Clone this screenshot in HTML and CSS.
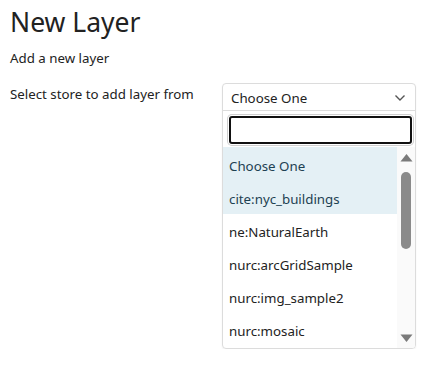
FILE: index.html
```html
<!DOCTYPE html>
<html lang="en">
<head>
    <meta charset="UTF-8">
    <title>New Layer</title>
    <link rel="stylesheet" href="styles.css">
</head>
<body>
    <div class="page">
        <h1>New Layer</h1>
        <p class="subtitle">Add a new layer</p>

        <!-- Store picker -->
        <div class="field-row">
            <label class="field-label">Select store to add layer from</label>
            <div class="dropdown">
                <div class="dropdown-head">
                    <span>Choose One</span>
                    <svg class="chevron" width="12" height="8" viewBox="0 0 12 8">
                        <path d="M1.5 1.5 L6 6 L10.5 1.5" fill="none" stroke="#555" stroke-width="1.4"/>
                    </svg>
                </div>
                <div class="dropdown-search">
                    <input type="text" class="search-input">
                </div>
                <div class="dropdown-body">
                    <ul class="options">
                        <li class="option hl">Choose One</li>
                        <li class="option hl">cite:nyc_buildings</li>
                        <li class="option">ne:NaturalEarth</li>
                        <li class="option">nurc:arcGridSample</li>
                        <li class="option">nurc:img_sample2</li>
                        <li class="option">nurc:mosaic</li>
                    </ul>
                    <div class="scrollbar">
                        <div class="sb-btn">
                            <svg width="13" height="9" viewBox="0 0 13 9"><path d="M0.5 8.5 L6.5 1 L12.5 8.5 Z" fill="#7a7a7a"/></svg>
                        </div>
                        <div class="sb-track"><div class="sb-thumb"></div></div>
                        <div class="sb-btn">
                            <svg width="13" height="9" viewBox="0 0 13 9"><path d="M0.5 0.5 L6.5 8 L12.5 0.5 Z" fill="#7a7a7a"/></svg>
                        </div>
                    </div>
                </div>
            </div>
        </div>
    </div>
</body>
</html>
```
FILE: styles.css
```css
body {
    margin: 0;
    font-family: "Noto Sans", "Open Sans", sans-serif;
    color: #222;
    background-color: #fff;
}
.page {
    padding: 6px 10px 0 10px;
}
h1 {
    margin: 0;
    font-size: 26.5px;
    font-weight: 400;
    line-height: 32px;
}
.subtitle {
    margin: 10px 0 15px 0;
    font-size: 13.3px;
    line-height: 20px;
}
.field-row {
    display: flex;
    align-items: flex-start;
}
.field-label {
    width: 212px;
    padding-top: 1px;
    font-size: 13.3px;
    line-height: 20px;
}
.dropdown {
    width: 192px;
    border: 1px solid #dcdcdc;
    border-radius: 4px;
    box-shadow: 0 1px 2px rgba(0, 0, 0, 0.06);
    font-size: 13.3px;
    line-height: 20px;
    overflow: hidden;
}
.dropdown-head {
    display: flex;
    justify-content: space-between;
    align-items: center;
    height: 27px;
    padding: 1px 8px 0 8px;
    border-bottom: 1px solid #dcdcdc;
    box-sizing: border-box;
}
.chevron {
    margin-right: 1px;
}
.dropdown-search {
    padding: 5px 3px 3px 6px;
}
.search-input {
    display: block;
    width: 183px;
    height: 28px;
    box-sizing: border-box;
    margin: 0;
    border: 2px solid #111;
    border-radius: 3px;
    box-shadow: 0 0 0 1px #fff, 0 0 0 2px #cfcfcf;
    outline: none;
    font-family: inherit;
    font-size: 13.3px;
}
.dropdown-body {
    display: flex;
    height: 201px;
}
.options {
    flex: 1;
    list-style: none;
    margin: 0;
    padding: 0;
    overflow: hidden;
}
.option {
    height: 33px;
    line-height: 30px;
    padding: 3px 0 0 6px;
    box-sizing: border-box;
    white-space: nowrap;
}
.option:first-child {
    height: 34px;
    padding-top: 4px;
}
.option.hl {
    background-color: #e4f0f5;
    color: #1d4152;
}
.scrollbar {
    width: 18px;
    display: flex;
    flex-direction: column;
    background-color: #fafafa;
}
.sb-btn {
    height: 20px;
    display: flex;
    justify-content: center;
    align-items: center;
}
.sb-track {
    flex: 1;
    padding-top: 5px;
}
.sb-thumb {
    width: 10px;
    height: 77px;
    margin: 0 auto;
    border-radius: 5px;
    background-color: #8a8a8a;
}
```
